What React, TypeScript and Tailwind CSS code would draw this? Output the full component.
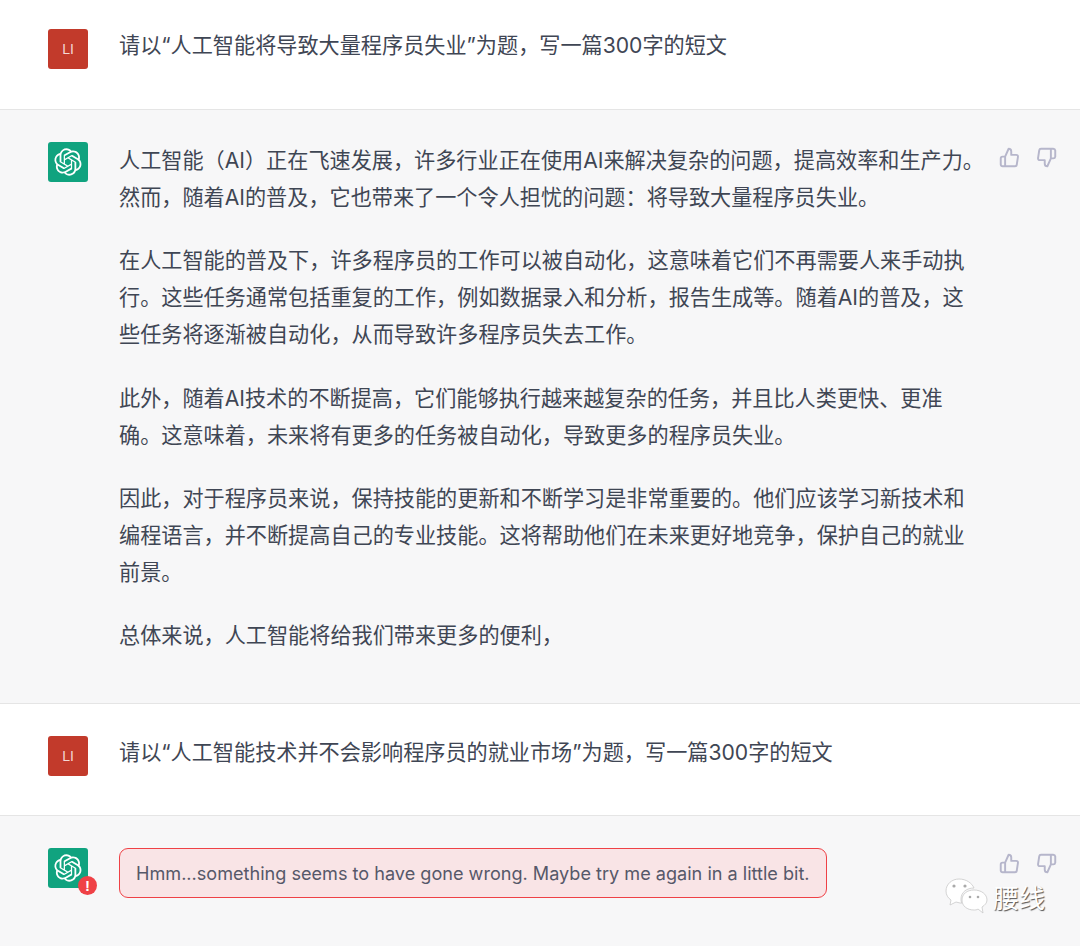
import React from "react";

const LOGO =
  "M37.5324 16.8707C37.9808 15.5241 38.1363 14.0974 37.9886 12.6859C37.8409 11.2744 37.3934 9.91076 36.676 8.68622C35.6126 6.83404 33.9882 5.3676 32.0373 4.4985C30.0864 3.62941 27.9098 3.40259 25.8215 3.85078C24.8796 2.7893 23.7219 1.94125 22.4257 1.36341C21.1295 0.785575 19.7249 0.491269 18.3058 0.500197C16.1708 0.495044 14.0893 1.16803 12.3614 2.42214C10.6335 3.67624 9.34853 5.44666 8.6917 7.47815C7.30085 7.76286 5.98686 8.3414 4.8377 9.17505C3.68854 10.0087 2.73073 11.0782 2.02839 12.312C0.956464 14.1591 0.498905 16.2988 0.721698 18.4228C0.944492 20.5467 1.83612 22.5449 3.268 24.1293C2.81966 25.4759 2.66413 26.9026 2.81182 28.3141C2.95951 29.7256 3.40701 31.0892 4.12437 32.3138C5.18791 34.1659 6.8123 35.6322 8.76321 36.5013C10.7141 37.3704 12.8907 37.5973 14.9789 37.1492C15.9208 38.2107 17.0786 39.0587 18.3747 39.6366C19.6709 40.2144 21.0755 40.5087 22.4946 40.4998C24.6307 40.5054 26.7133 39.8321 28.4418 38.5772C30.1704 37.3223 31.4556 35.5506 32.1119 33.5179C33.5027 33.2332 34.8167 32.6547 35.9659 31.821C37.115 30.9874 38.0728 29.9178 38.7752 28.684C39.8458 26.8371 40.3023 24.6979 40.0789 22.5748C39.8556 20.4517 38.9639 18.4544 37.5324 16.8707ZM22.4978 37.8849C20.7443 37.8874 19.0459 37.2733 17.6994 36.1501C17.7601 36.117 17.8666 36.0586 17.936 36.0161L25.9004 31.4156C26.1003 31.3019 26.2663 31.137 26.3813 30.9378C26.4964 30.7386 26.5563 30.5124 26.5549 30.2825V19.0542L29.9213 20.998C29.9389 21.0068 29.9541 21.0198 29.9656 21.0359C29.977 21.052 29.9842 21.0707 29.9867 21.0902V30.3889C29.9842 32.375 29.1946 34.2791 27.7909 35.6841C26.3872 37.0892 24.4838 37.8806 22.4978 37.8849ZM6.39227 31.0064C5.51397 29.4888 5.19742 27.7107 5.49804 25.9832C5.55718 26.0187 5.66048 26.0818 5.73461 26.1244L13.699 30.7248C13.8975 30.8408 14.1233 30.902 14.3532 30.902C14.583 30.902 14.8088 30.8408 15.0073 30.7248L24.731 25.1103V28.9979C24.7321 29.0177 24.7283 29.0376 24.7199 29.0556C24.7115 29.0736 24.6988 29.0893 24.6829 29.1012L16.6317 33.7497C14.9096 34.7416 12.8643 35.0097 10.9447 34.4954C9.02506 33.9811 7.38785 32.7263 6.39227 31.0064ZM4.29707 13.6194C5.17156 12.0998 6.55279 10.9364 8.19885 10.3327C8.19885 10.4013 8.19491 10.5228 8.19491 10.6071V19.808C8.19351 20.0378 8.25334 20.2638 8.36823 20.4629C8.48312 20.6619 8.64893 20.8267 8.84863 20.9404L18.5723 26.5542L15.206 28.4979C15.1894 28.5089 15.1703 28.5155 15.1505 28.5173C15.1307 28.5191 15.1107 28.516 15.0924 28.5082L7.04046 23.8557C5.32135 22.8601 4.06716 21.2235 3.55289 19.3046C3.03862 17.3858 3.30624 15.3413 4.29707 13.6194ZM31.955 20.0556L22.2312 14.4411L25.5976 12.4981C25.6142 12.4872 25.6333 12.4805 25.6531 12.4787C25.6729 12.4769 25.6928 12.4801 25.7111 12.4879L33.7631 17.1364C34.9967 17.849 36.0017 18.8982 36.6606 20.1613C37.3194 21.4244 37.6047 22.849 37.4832 24.2684C37.3617 25.6878 36.8382 27.0432 35.9743 28.1759C35.1103 29.3086 33.9415 30.1717 32.6047 30.6641C32.6047 30.5947 32.6047 30.4733 32.6047 30.3889V21.188C32.6066 20.9586 32.5474 20.7328 32.4332 20.5338C32.319 20.3348 32.154 20.1698 31.955 20.0556ZM35.3055 15.0128C35.2464 14.9765 35.1431 14.9142 35.069 14.8717L27.1045 10.2712C26.906 10.1554 26.6803 10.0943 26.4504 10.0943C26.2206 10.0943 25.9948 10.1554 25.7963 10.2712L16.0726 15.8858V11.9982C16.0715 11.9783 16.0753 11.9585 16.0837 11.9405C16.0921 11.9225 16.1048 11.9068 16.1207 11.8949L24.1719 7.25025C25.4053 6.53903 26.8121 6.19376 28.2311 6.25482C29.6502 6.31589 31.0225 6.78077 32.1896 7.59508C33.3568 8.40939 34.2708 9.53945 34.8248 10.8531C35.3788 12.1667 35.5501 13.6095 35.3185 15.0128H35.3055ZM14.2426 21.9419L10.8754 19.9981C10.8578 19.9893 10.8426 19.9763 10.8311 19.9602C10.8197 19.9441 10.8125 19.9254 10.81 19.9058V10.6071C10.8108 9.18295 11.2168 7.78848 11.9809 6.58696C12.7449 5.38544 13.8352 4.42659 15.1242 3.82264C16.4131 3.21869 17.8474 2.99464 19.2589 3.1767C20.6703 3.35876 22.0006 3.93941 23.0939 4.85067C23.0332 4.88379 22.9276 4.94215 22.8573 4.98473L14.8929 9.58517C14.6931 9.69878 14.5271 9.86356 14.4121 10.0626C14.2971 10.2616 14.2372 10.4877 14.2387 10.7175L14.2426 21.9419ZM16.071 17.9991L20.4 15.4978L24.7299 17.9975V22.9985L20.4 25.4983L16.071 22.9985V17.9991Z";

function UserAvatar() {
  return (
    <div className="w-10 h-10 shrink-0 rounded-[3px] bg-[#c23a2b] text-[#f5d9d5] flex items-center justify-center text-[14px] font-['Liberation_Sans',sans-serif]">
      LI
    </div>
  );
}

function BotAvatar({ error }: { error?: boolean }) {
  return (
    <div className="relative w-10 h-10 shrink-0 rounded-[3px] bg-[#10a37f] flex items-center justify-center">
      <svg width="28" height="28" viewBox="0 0 41 41" fill="white">
        <path d={LOGO} />
      </svg>
      {error && (
        <div className="absolute right-[-9px] bottom-[-7px] w-[19px] h-[19px] rounded-full bg-[#ef4146] text-white flex items-center justify-center text-[15px] font-bold leading-none font-['Liberation_Sans',sans-serif]">
          !
        </div>
      )}
    </div>
  );
}

function Thumbs() {
  return (
    <div className="flex gap-[16px] text-[#b6b6cb] shrink-0">
      <svg width="21" height="21" viewBox="0 0 24 24" fill="none" stroke="currentColor" strokeWidth="2.2" strokeLinecap="round" strokeLinejoin="round">
        <path d="M14 9V5a3 3 0 0 0-3-3l-4 9v11h11.28a2 2 0 0 0 2-1.7l1.38-9a2 2 0 0 0-2-2.3zM7 22H4a2 2 0 0 1-2-2v-7a2 2 0 0 1 2-2h3" />
      </svg>
      <svg width="21" height="21" viewBox="0 0 24 24" fill="none" stroke="currentColor" strokeWidth="2.2" strokeLinecap="round" strokeLinejoin="round">
        <path d="M10 15v4a3 3 0 0 0 3 3l4-9V2H5.72a2 2 0 0 0-2 1.7l-1.38 9a2 2 0 0 0 2 2.3zm7-13h2.67A2.31 2.31 0 0 1 22 4v7a2.31 2.31 0 0 1-2.33 2H17" />
      </svg>
    </div>
  );
}

function Watermark() {
  return (
    <div className="absolute left-[945px] top-[878px] flex items-start gap-[5px]">
      <svg width="43" height="37" viewBox="0 0 43 37">
        <path d="M14 1C7 1 1 6 1 13c0 4 2 7 5 9l-1 5 6-3c1 0 3 1 4 1h2c-1-1-1-3-1-4 0-7 6-11 13-11C27 5 21 1 14 1z" fill="#fff" stroke="#c9c9c9" strokeWidth="0.8" />
        <path d="M29 12c-7 0-12 4-12 10s5 10 12 10c1 0 3 0 4-1l5 4-1-6c3-2 5-4 5-7 0-6-6-10-13-10z" fill="#fff" stroke="#c9c9c9" strokeWidth="0.8" />
        <circle cx="9" cy="8" r="1.6" fill="#aaa" />
        <circle cx="20" cy="8" r="1.6" fill="#aaa" />
        <circle cx="25" cy="19" r="1.3" fill="#aaa" />
        <circle cx="33" cy="19" r="1.3" fill="#aaa" />
      </svg>
      <span className="text-[26px] leading-none mt-[8px] text-white [text-shadow:1px_1px_1px_#555]">腰线</span>
    </div>
  );
}

export default function App() {
  return (
    <div className="relative w-[1080px] h-[946px] overflow-hidden bg-white text-[21.15px] leading-[36.96px] text-[#3f4654] font-['Inter','Noto_Sans_CJK_SC',sans-serif]">
      <div className="flex gap-8 pl-12 pr-4 pt-[29px] h-[110px] border-b border-[#e5e5e5]">
        <UserAvatar />
        <div className="mt-[-1px] ml-[-1px]">请以“人工智能将导致大量程序员失业”为题，写一篇300字的短文</div>
      </div>

      <div className="flex gap-8 pl-12 pr-4 pt-[32px] h-[594px] bg-[#f7f7f8] border-b border-[#e5e5e5]">
        <BotAvatar />
        <div className="w-[866.6px] shrink-0 flex flex-col gap-[26.4px] mt-[1px] ml-[-1px]">
          <p>人工智能（AI）正在飞速发展，许多行业正在使用AI来解决复杂的问题，提高效率和生产力。然而，随着AI的普及，它也带来了一个令人担忧的问题：将导致大量程序员失业。</p>
          <p>在人工智能的普及下，许多程序员的工作可以被自动化，这意味着它们不再需要人来手动执行。这些任务通常包括重复的工作，例如数据录入和分析，报告生成等。随着AI的普及，这<br />些任务将逐渐被自动化，从而导致许多程序员失去工作。</p>
          <p>此外，随着AI技术的不断提高，它们能够执行越来越复杂的任务，并且比人类更快、更准<br />确。这意味着，未来将有更多的任务被自动化，导致更多的程序员失业。</p>
          <p>因此，对于程序员来说，保持技能的更新和不断学习是非常重要的。他们应该学习新技术和编程语言，并不断提高自己的专业技能。这将帮助他们在未来更好地竞争，保护自己的就业前景。</p>
          <p>总体来说，人工智能将给我们带来更多的便利，</p>
        </div>
        <div className="ml-[-18.6px] mt-[5px]">
          <Thumbs />
        </div>
      </div>

      <div className="flex gap-8 pl-12 pr-4 pt-[32px] h-[112px] border-b border-[#e5e5e5]">
        <UserAvatar />
        <div className="mt-[-1px] ml-[-1px]">请以“人工智能技术并不会影响程序员的就业市场”为题，写一篇300字的短文</div>
      </div>

      <div className="flex gap-8 pl-12 pr-4 pt-[32px] h-[130px] bg-[#f7f7f8]">
        <BotAvatar error />
        <div className="w-[866.6px] shrink-0 ml-[-1px]">
          <div className="w-fit h-[50px] px-4 flex items-center rounded-[9px] border-[1.5px] border-[#ef4146] bg-[#f9e4e6] text-[18.1px] leading-none text-[#565869]">
            Hmm...something seems to have gone wrong. Maybe try me again in a little bit.
          </div>
        </div>
        <div className="ml-[-18.6px] mt-[5px]">
          <Thumbs />
        </div>
      </div>

      <Watermark />
    </div>
  );
}
